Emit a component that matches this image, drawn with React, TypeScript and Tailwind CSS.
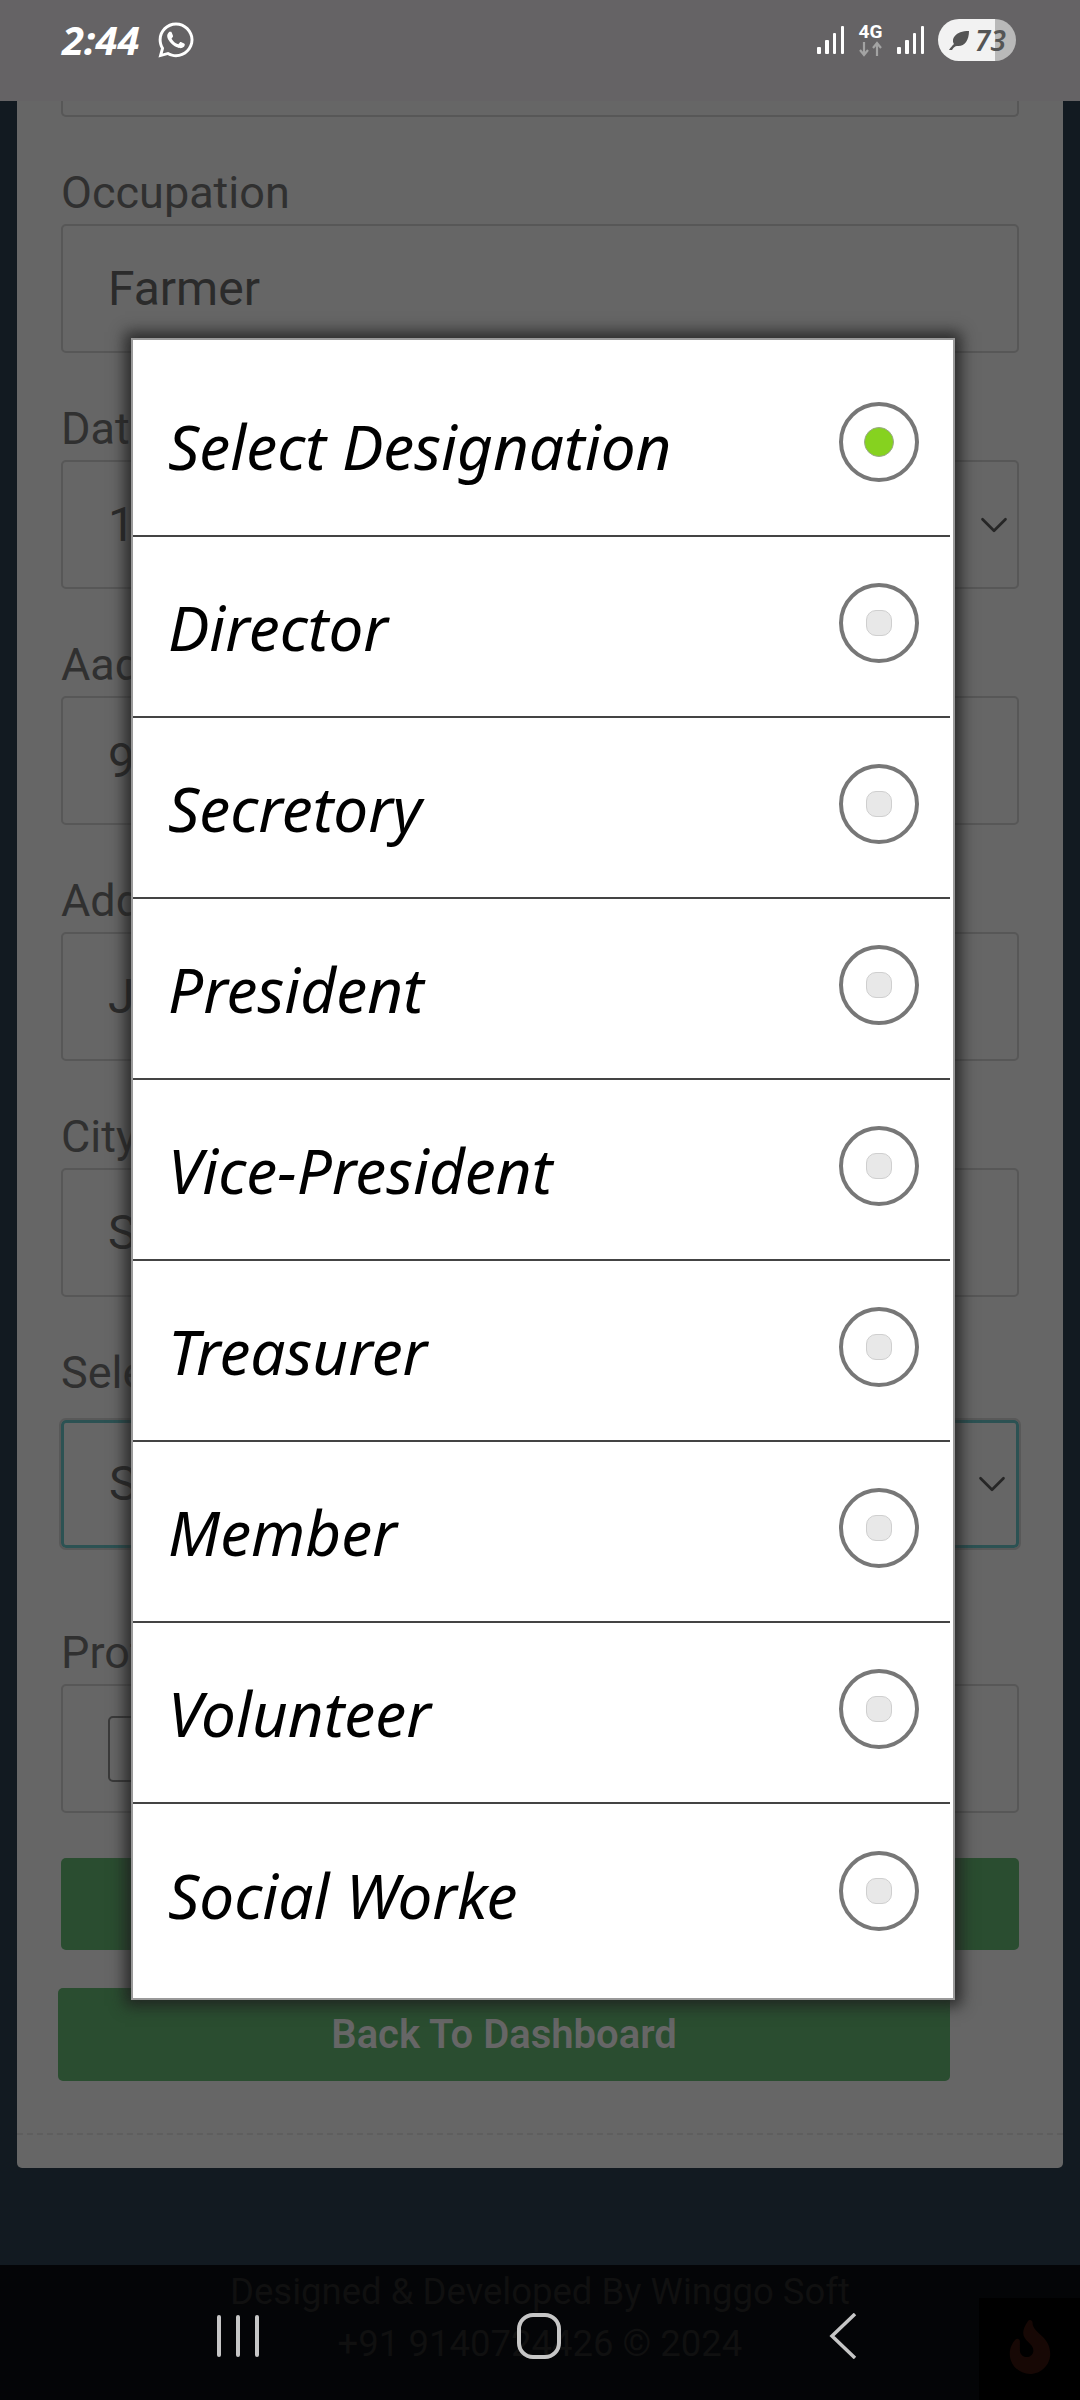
import React from "react";
import { FaWhatsapp, FaFire } from "react-icons/fa";
import { ChevronDown } from "lucide-react";

const options = ["Select Designation","Director","Secretory","President","Vice-President","Treasurer","Member","Volunteer","Social Worke"];

function Field({ label, value, mb = "mb-[56px]", labelMb = "mb-[11px]", chevron = false, focus = false, file = false }: { label: string; value?: string; mb?: string; labelMb?: string; chevron?: boolean; focus?: boolean; file?: boolean }) {
  return (
    <div className={mb}>
      <div className={`h-[40px] text-[45px] leading-[40px] text-[#303030] whitespace-nowrap ${labelMb}`}>{label}</div>
      <div className={`rounded-[5px] flex items-center justify-between pl-[45px] ${focus ? "h-[128px] border-[3px] border-[#2c5253] outline-2 outline-[#585858] pr-[1px]" : "h-[129px] border-2 border-[#575757] pr-0"}`}>
        {file ? <div className="w-[120px] h-[66px] rounded-[5px] border-2 border-[#3a3a3a]" /> : <span className="text-[48px] text-[#2b2b2b]">{value}</span>}
        {chevron && <ChevronDown size={46} strokeWidth={1.4} className="text-[#262626]" />}
      </div>
    </div>
  );
}

function Signal() {
  return (
    <svg width="27" height="28" viewBox="0 0 27 28" fill="#fff"><rect x="0" y="21" width="4" height="7" rx="1"/><rect x="8" y="14" width="4" height="14" rx="1"/><rect x="16" y="7" width="3" height="21" rx="1"/><rect x="24" y="0" width="3" height="28" rx="1"/></svg>
  );
}

export default function App() {
  return (
    <div className="relative w-[1080px] h-[2400px] overflow-hidden bg-[#121a21] flex flex-col font-['Roboto',sans-serif]">
      <div className="h-[101px] shrink-0 bg-[#656365] flex items-start justify-between pl-[62px] pr-[64px] pt-[18px] z-10">
        <div className="flex items-center gap-[16px] text-white h-[44px]">
          <span className="text-[40px] leading-[44px] font-bold italic font-['Noto_Sans',cursive]">2:44</span>
          <FaWhatsapp size={40} />
        </div>
        <div className="flex items-center gap-[14px] h-[44px]">
          <Signal />
          <svg width="25" height="34" viewBox="0 0 25 34"><text x="12.5" y="15" textAnchor="middle" fontSize="19" fontWeight="700" fill="#fff" fontFamily="Roboto">4G</text><path d="M6 19v13M2 27l4 5 4-5" stroke="#a3a3a3" strokeWidth="2.2" fill="none"/><path d="M19 33V20M15 25l4-5 4 5" stroke="#a3a3a3" strokeWidth="2.2" fill="none"/></svg>
          <Signal />
          <div className="relative w-[78px] h-[42px] rounded-full overflow-hidden flex">
            <div className="w-[57px] bg-[#f2f2f2]" />
            <div className="w-[21px] bg-[#b9b9b9]" />
            <div className="absolute inset-0 flex items-center pl-[8px] gap-[3px] text-[#555]">
              <svg width="26" height="26" viewBox="0 0 26 26" fill="#555"><path d="M3 23c2-3 3-4 5-6-3-5 1-13 15-13 0 10-5 16-12 15-2 0-3 1-5 4z"/></svg>
              <span className="text-[28px] leading-[30px] italic font-semibold font-['Noto_Sans',cursive]">73</span>
            </div>
          </div>
        </div>
      </div>

      <div className="mx-[17px] h-[2067px] shrink-0 bg-[#666666] rounded-b-[5px] px-[44px]">
        <div className="h-[16px] rounded-b-[5px] border-2 border-t-0 border-[#575757] mb-[56px]" />
        <Field label="Occupation" value="Farmer" />
        <Field label="Date of Birth" value="1" chevron />
        <Field label="Aadhar Number" value="9" />
        <Field label="Address" value="J" />
        <Field label="City" value="S" />
        <Field label="Select Designation" value="S" mb="mb-[85px]" labelMb="mb-[27px]" chevron focus />
        <Field label="Profile Image" mb="mb-[45px]" file />
        <div className="h-[92px] rounded-[5px] bg-[#2a4d30] mb-[38px]" />
        <div className="h-[93px] w-[892px] -ml-[3px] rounded-[5px] bg-[#2a4d30] flex items-center justify-center text-[40px] font-semibold text-[#666]">Back To Dashboard</div>
        <div className="-mx-[44px] mt-[52px] border-t-2 border-dashed border-[#5e5e5e]" />
      </div>

      <div className="h-[97px] shrink-0" />

      <div className="flex-1 bg-[#040507] relative text-center text-[#101010] text-[36.5px] leading-[52px] pt-[1px]">
        <div>Designed &amp; Developed By Winggo Soft</div>
        <div>+91 9140724426 © 2024</div>
        <div className="absolute right-0 bottom-0 w-[101px] h-[102px] bg-black flex items-center justify-center pb-[4px]">
          <FaFire size={54} className="text-[#170805]" />
        </div>
      </div>

      <div className="absolute left-0 bottom-[40px] w-full h-[48px] flex items-center">
        <div className="absolute left-[217px] flex gap-[15px]">
          <div className="w-[4px] h-[42px] bg-[#c6c6c6] rounded" />
          <div className="w-[4px] h-[42px] bg-[#c6c6c6] rounded" />
          <div className="w-[4px] h-[42px] bg-[#c6c6c6] rounded" />
        </div>
        <div className="absolute left-[517px] w-[44px] h-[46px] border-[4px] border-[#c6c6c6] rounded-[16px]" />
        <svg className="absolute left-[829px]" width="28" height="46" viewBox="0 0 28 46" fill="none"><path d="M26 1 3 23l23 22" stroke="#c6c6c6" strokeWidth="3.5"/></svg>
      </div>

      <div className="absolute left-[131px] top-[338px] w-[824px] h-[1662px] border-2 border-[#9a9a9a] bg-white shadow-[0_0_14px_6px_rgba(30,30,30,0.85)] pt-[16px] pr-[3px]">
        {options.map((o, i) => (
          <div key={o} className={`h-[181px] flex items-center justify-between pl-[35px] pr-[31px] ${i < 8 ? "border-b-2 border-[#444]" : ""}`}>
            <span className="text-[62px] leading-[70px] italic text-black font-['Noto_Sans',cursive]">{o}</span>
            <div className="w-[80px] h-[80px] rounded-full border-[4px] border-[#777] flex items-center justify-center -translate-y-[4px]">
              {i === 0 ? <div className="w-[30px] h-[30px] rounded-full bg-[#86d21f] border border-[#9aa88a]" /> : <div className="w-[26px] h-[26px] rounded-[10px] bg-[#e8e8e8] border border-[#cfcfcf]" />}
            </div>
          </div>
        ))}
      </div>
    </div>
  );
}
